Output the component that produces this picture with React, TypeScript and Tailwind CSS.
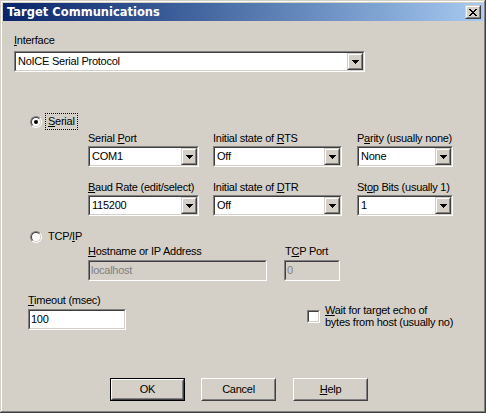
import React from "react";

// Classic Win2000 style "Target Communications" dialog

type BoxProps = { className?: string; inner?: string; children?: React.ReactNode };

const Sunken: React.FC<BoxProps> = ({ className = "", inner = "bg-white", children }) => (
  <div className={`border border-[#808080] border-r-white border-b-white ${className}`}>
    <div className={`h-full border border-[#404040] border-r-[#d4d0c8] border-b-[#d4d0c8] ${inner}`}>
      {children}
    </div>
  </div>
);

const Raised: React.FC<BoxProps> = ({ className = "", inner = "", children }) => (
  <div className={`border border-[#d4d0c8] border-r-[#404040] border-b-[#404040] ${className}`}>
    <div className={`h-full border border-white border-r-[#808080] border-b-[#808080] ${inner}`}>
      {children}
    </div>
  </div>
);

const DownArrow = () => (
  <svg width="7" height="4" viewBox="0 0 7 4" shapeRendering="crispEdges">
    <path d="M0 0h7v1H0zM1 1h5v1H1zM2 2h3v1H2zM3 3h1v1H3z" fill="#000" />
  </svg>
);

const Combo: React.FC<{ value: string; className?: string }> = ({ value, className = "" }) => (
  <Sunken className={`h-[21px] ${className}`} inner="bg-white flex items-center">
    <span className="flex-1 pl-[2px] whitespace-nowrap overflow-hidden">{value}</span>
    <Raised className="w-[16px] h-[17px] bg-[#d4d0c8]" inner="flex items-center justify-center">
      <DownArrow />
    </Raised>
  </Sunken>
);

const Edit: React.FC<{ value: string; disabled?: boolean; className?: string }> = ({
  value,
  disabled = false,
  className = "",
}) => (
  <Sunken
    className={`h-[21px] ${className}`}
    inner={`flex items-center pl-[1px] ${disabled ? "bg-[#d4d0c8] text-[#808080]" : "bg-white"}`}
  >
    <span className="whitespace-nowrap">{value}</span>
  </Sunken>
);

const Label: React.FC<{ children: React.ReactNode; className?: string }> = ({ children, className = "" }) => (
  <div className={`h-[13px] leading-[13px] whitespace-nowrap ${className}`}>{children}</div>
);

const Radio: React.FC<{ checked?: boolean }> = ({ checked = false }) => (
  <div className="w-[12px] h-[12px] rounded-full border border-[#808080] border-r-white border-b-white">
    <div className="w-full h-full rounded-full border border-[#404040] border-r-[#d4d0c8] border-b-[#d4d0c8] bg-white flex items-center justify-center">
      {checked && <div className="w-[4px] h-[4px] rounded-full bg-black" />}
    </div>
  </div>
);

const Button: React.FC<{ children: React.ReactNode; isDefault?: boolean; className?: string }> = ({
  children,
  isDefault = false,
  className = "",
}) => {
  if (isDefault) {
    return (
      <div className={`w-[75px] h-[23px] border border-black ${className}`}>
        <div className="h-full border border-white border-r-[#404040] border-b-[#404040]">
          <div className="h-full border border-[#d4d0c8] border-r-[#808080] border-b-[#808080] flex items-center justify-center">
            {children}
          </div>
        </div>
      </div>
    );
  }
  return (
    <div className={`w-[75px] h-[23px] border border-white border-r-[#404040] border-b-[#404040] ${className}`}>
      <div className="h-full border border-[#d4d0c8] border-r-[#808080] border-b-[#808080] flex items-center justify-center">
        {children}
      </div>
    </div>
  );
};

const CloseGlyph = () => (
  <svg width="8" height="7" viewBox="0 0 8 7" shapeRendering="crispEdges">
    <path
      d="M0 0h2v1H0zM6 0h2v1H6zM1 1h2v1H1zM5 1h2v1H5zM2 2h4v1H2zM3 3h2v1H3zM2 4h4v1H2zM1 5h2v1H1zM5 5h2v1H5zM0 6h2v1H0zM6 6h2v1H6z"
      fill="#000"
    />
  </svg>
);

export default function App() {
  return (
    <div className="w-[486px] h-[413px] bg-[#d4d0c8] p-[3px] text-[11px] leading-[13px] tracking-[-0.25px] text-black font-['Liberation_Sans',Arial,sans-serif] shadow-[inset_-1px_-1px_0_#404040,inset_1px_1px_0_#d4d0c8,inset_-2px_-2px_0_#808080,inset_2px_2px_0_#ffffff]">
      {/* Title bar */}
      <div className="h-[18px] flex items-center pl-[4px] pr-[2px] bg-linear-to-r from-[#0a246a] to-[#a6caf0]">
        <span className="flex-1 text-white font-bold text-[11.5px] tracking-normal font-['DejaVu_Sans',sans-serif]">
          Target Communications
        </span>
        <Raised className="w-[16px] h-[14px] bg-[#d4d0c8]" inner="flex items-center justify-center">
          <CloseGlyph />
        </Raised>
      </div>

      {/* Interface */}
      <div className="pl-[11px] pt-[13px]">
        <Label>
          <u>I</u>nterface
        </Label>
        <Combo value="NoICE Serial Protocol" className="mt-[4px] w-[351px]" />
      </div>

      {/* Serial */}
      <div className="ml-[27px] mt-[41px] h-[17px] flex items-center">
        <Radio checked />
        <span className="ml-[3px] px-[2px] leading-[15px] border border-dotted border-black">
          <u>S</u>erial
        </span>
      </div>

      <div className="ml-[85px] mt-[2px]">
        <div className="flex">
          <div className="w-[111px]">
            <Label>
              Serial <u>P</u>ort
            </Label>
            <Combo value="COM1" className="mt-[1px]" />
          </div>
          <div className="w-[129px] ml-[14px]">
            <Label>
              Initial state of <u>R</u>TS
            </Label>
            <Combo value="Off" className="mt-[1px]" />
          </div>
          <div className="w-[96px] ml-[15px]">
            <Label>
              P<u>a</u>rity (usually none)
            </Label>
            <Combo value="None" className="mt-[1px]" />
          </div>
        </div>
        <div className="flex mt-[14px]">
          <div className="w-[111px]">
            <Label>
              <u>B</u>aud Rate (edit/select)
            </Label>
            <Combo value="115200" className="mt-[1px]" />
          </div>
          <div className="w-[129px] ml-[14px]">
            <Label>
              Initial state of <u>D</u>TR
            </Label>
            <Combo value="Off" className="mt-[1px]" />
          </div>
          <div className="w-[96px] ml-[15px]">
            <Label>
              St<u>o</u>p Bits (usually 1)
            </Label>
            <Combo value="1" className="mt-[1px]" />
          </div>
        </div>
      </div>

      {/* TCP/IP */}
      <div className="ml-[27px] mt-[12px] h-[17px] flex items-center">
        <Radio />
        <span className="ml-[3px] px-[2px] leading-[15px] border border-transparent">
          TCP/<u>I</u>P
        </span>
      </div>

      <div className="ml-[85px] flex">
        <div className="w-[179px]">
          <Label>
            <u>H</u>ostname or IP Address
          </Label>
          <Edit value="localhost" disabled className="mt-[2px]" />
        </div>
        <div className="w-[56px] ml-[17px]">
          <Label className="pl-[1px]">
            T<u>C</u>P Port
          </Label>
          <Edit value="0" disabled className="mt-[2px]" />
        </div>
      </div>

      {/* Timeout + echo */}
      <div className="ml-[25px] mt-[13px] flex items-start">
        <div className="w-[98px]">
          <Label>
            <u>T</u>imeout (msec)
          </Label>
          <Edit value="100" className="mt-[2px]" />
        </div>
        <div className="ml-[181px] mt-[10px] flex items-start">
          <Sunken className="mt-[6px] w-[13px] h-[13px]" />
          <div className="ml-[5px] leading-[12px]">
            <div>
              <u>W</u>ait for target echo of
            </div>
            <div>bytes from host (usually no)</div>
          </div>
        </div>
      </div>

      {/* Buttons */}
      <div className="ml-[107px] mt-[48px] flex">
        <Button isDefault>OK</Button>
        <Button className="ml-[16px]">Cancel</Button>
        <Button className="ml-[17px]">
          <u>H</u>elp
        </Button>
      </div>
    </div>
  );
}
